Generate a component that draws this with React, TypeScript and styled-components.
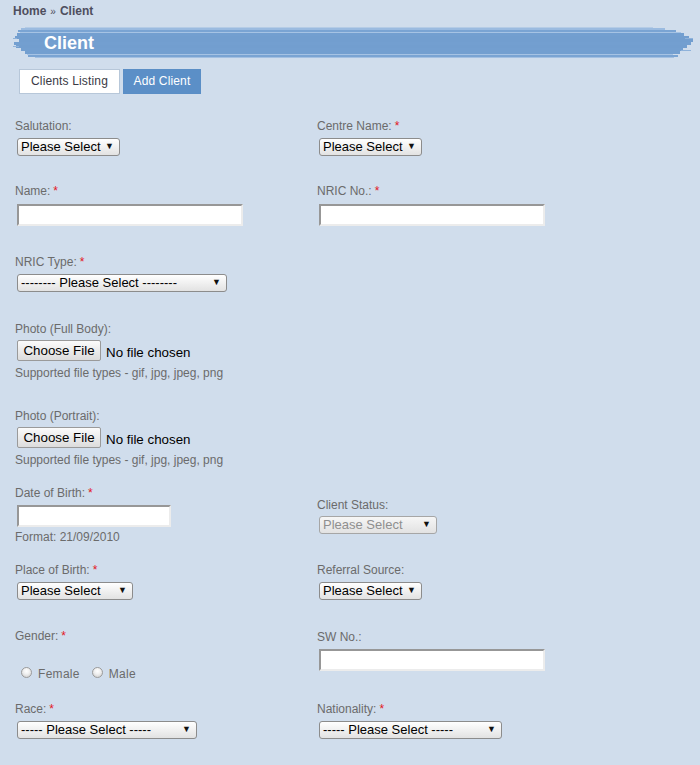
import React from "react";
import styled, { createGlobalStyle } from "styled-components";

const GlobalStyle = createGlobalStyle`
  html, body {
    margin: 0;
    padding: 0;
    background: #d0ddec;
    font-family: "Liberation Sans", Arial, sans-serif;
  }
`;

const Page = styled.div`
  width: 700px;
  min-height: 765px;
  background: #d0ddec;
  padding-top: 4px;
  box-sizing: border-box;
`;

const Breadcrumb = styled.div`
  padding-left: 13px;
  font-size: 12px;
  line-height: 14px;
  font-weight: bold;
  color: #4e4e5e;

  span {
    font-weight: normal;
    font-size: 10px;
    margin: 0 4px 0 4px;
  }
`;

const Banner = styled.div`
  position: relative;
  margin: 7px 0 0 13px;
  width: 682px;
  height: 36px;
`;

const BannerArt = styled.svg`
  position: absolute;
  left: 0;
  top: 0;
`;

const BannerTitle = styled.h1`
  position: relative;
  margin: 0;
  padding-left: 31px;
  font-size: 18px;
  line-height: 35px;
  font-weight: bold;
  color: #ffffff;
`;

const Tabs = styled.div`
  display: flex;
  gap: 3px;
  margin: 7px 0 0 19px;
`;

const Tab = styled.div<{ $active?: boolean; $w: number }>`
  width: ${(p) => p.$w}px;
  height: 25px;
  box-sizing: border-box;
  text-align: center;
  font-size: 12px;
  line-height: 23px;
  border: 1px solid ${(p) => (p.$active ? "#5a8ec6" : "#b7c7d9")};
  background: ${(p) => (p.$active ? "#5b8fc7" : "#ffffff")};
  color: ${(p) => (p.$active ? "#ffffff" : "#3a3a44")};
  letter-spacing: 0.15px;
`;

const Form = styled.div`
  margin-top: 25px;
  padding-left: 15px;
`;

const Row = styled.div<{ $h: number }>`
  display: grid;
  grid-template-columns: 302px 1fr;
  align-items: start;
  height: ${(p) => p.$h}px;
`;

const Cell = styled.div<{ $offset?: number }>`
  padding-top: ${(p) => p.$offset ?? 0}px;
`;

const Label = styled.div`
  font-size: 12px;
  line-height: 15px;
  color: #6b6b6b;
`;

const Req = styled.span`
  color: #e3161d;
  margin-left: 3px;
`;

const Control = styled.div<{ $top?: number }>`
  margin: ${(p) => p.$top ?? 4}px 0 0 2px;
  display: flex;
  align-items: center;
`;

const Note = styled.div<{ $top: number }>`
  margin-top: ${(p) => p.$top}px;
  font-size: 12px;
  line-height: 15px;
  color: #6b6b6b;
`;

const SelectWrap = styled.span`
  position: relative;
  display: block;

  &::after {
    content: "▼";
    position: absolute;
    right: 6px;
    top: 3px;
    font-size: 9px;
    line-height: 11px;
    color: #111;
    pointer-events: none;
  }
`;

const Select = styled.select<{ $w: number }>`
  appearance: none;
  -webkit-appearance: none;
  display: block;
  width: ${(p) => p.$w}px;
  height: 18px;
  box-sizing: border-box;
  margin: 0;
  padding: 0 16px 0 3px;
  font-family: "Liberation Sans", Arial, sans-serif;
  font-size: 13px;
  line-height: 16px;
  color: #000;
  border: 1px solid #8c8c8c;
  border-radius: 3px;
  background: linear-gradient(#ffffff, #e2e2e2);

  &:disabled {
    color: #8f8f8f;
    border-color: #a6a6a6;
    background: linear-gradient(#f6f6f6, #e2e2e2);
    opacity: 1;
  }
`;

const TextInput = styled.input<{ $w: number }>`
  display: block;
  width: ${(p) => p.$w}px;
  height: 22px;
  box-sizing: border-box;
  margin: 0;
  padding: 1px 3px;
  font-family: "Liberation Sans", Arial, sans-serif;
  font-size: 13px;
  background: #fff;
  border-style: solid;
  border-width: 2px;
  border-color: #979797 #ececec #ececec #979797;
  outline: none;
`;

const FileButton = styled.button`
  width: 84px;
  height: 21px;
  box-sizing: border-box;
  margin: 0;
  padding: 0;
  font-family: "Liberation Sans", Arial, sans-serif;
  font-size: 13.33px;
  color: #000;
  border: 1px solid #9a9a9a;
  border-radius: 2px;
  background: linear-gradient(#fbfbfb, #dcdcdc);
`;

const FileStatus = styled.span`
  margin: 4px 0 0 5px;
  font-size: 13.33px;
  color: #000;
`;

const RadioRow = styled.div`
  display: flex;
  align-items: center;
  margin: 22px 0 0 6px;
  height: 15px;
`;

const RadioOption = styled.label`
  display: flex;
  align-items: center;
  margin-right: 12px;
  font-size: 12px;
  color: #6b6b6b;
  letter-spacing: 0.3px;
`;

const Radio = styled.input`
  appearance: none;
  -webkit-appearance: none;
  width: 11px;
  height: 11px;
  margin: -2px 6px 0 0;
  border: 1px solid #9b9b9b;
  border-radius: 50%;
  background: radial-gradient(circle at 50% 35%, #ffffff 0%, #f0f0f0 40%, #c9c9c9 100%);
  box-sizing: border-box;
`;

type Stroke = { y: number; h: number; x1: number; x2: number; c: string };

// brush strokes of the title banner, coordinates relative to the banner box
const strokes: Stroke[] = [
  { y: 1, h: 1, x1: 12, x2: 640, c: "#b5cce6" },
  { y: 2, h: 2, x1: 8, x2: 652, c: "#9bbbe0" },
  { y: 4, h: 2, x1: 5, x2: 663, c: "#7aa4d3" },
  { y: 6, h: 1, x1: 7, x2: 668, c: "#a6c3e4" },
  { y: 7, h: 3, x1: 4, x2: 671, c: "#739fd0" },
  { y: 10, h: 3, x1: 2, x2: 676, c: "#729ecf" },
  { y: 13, h: 3, x1: 6, x2: 680, c: "#729ecf" },
  { y: 16, h: 3, x1: 1, x2: 678, c: "#739fd0" },
  { y: 19, h: 3, x1: 3, x2: 674, c: "#729ecf" },
  { y: 22, h: 3, x1: 8, x2: 670, c: "#739fd0" },
  { y: 25, h: 3, x1: 12, x2: 667, c: "#739fd0" },
  { y: 28, h: 1, x1: 14, x2: 660, c: "#a6c3e4" },
  { y: 29, h: 2, x1: 15, x2: 665, c: "#7aa4d3" },
  { y: 31, h: 1, x1: 22, x2: 661, c: "#a3c0e2" },
];

const BannerStrokes = () => (
  <BannerArt width="682" height="36" viewBox="0 0 682 36">
    {strokes.map((s, i) => (
      <rect key={i} x={s.x1} y={s.y} width={s.x2 - s.x1} height={s.h} fill={s.c} />
    ))}
    <rect x="0" y="12" width="4" height="1" fill="#8fb2da" />
    <rect x="0" y="20" width="6" height="1" fill="#8fb2da" />
    <rect x="672" y="12" width="8" height="1" fill="#8fb2da" />
    <rect x="668" y="24" width="10" height="1" fill="#8fb2da" />
  </BannerArt>
);

const Dropdown = ({ w, text, disabled }: { w: number; text: string; disabled?: boolean }) => (
  <SelectWrap>
    <Select $w={w} disabled={disabled} defaultValue="">
      <option value="">{text}</option>
    </Select>
  </SelectWrap>
);

const FieldLabel = ({ text, required }: { text: string; required?: boolean }) => (
  <Label>
    {text}
    {required && <Req>*</Req>}
  </Label>
);

const FileField = () => (
  <Control $top={3}>
    <FileButton type="button">Choose File</FileButton>
    <FileStatus>No file chosen</FileStatus>
  </Control>
);

export default function App() {
  return (
    <Page>
      <GlobalStyle />
      <Breadcrumb>
        Home<span>»</span>Client
      </Breadcrumb>
      <Banner>
        <BannerStrokes />
        <BannerTitle>Client</BannerTitle>
      </Banner>
      <Tabs>
        <Tab $w={101}>Clients Listing</Tab>
        <Tab $w={78} $active>
          Add Client
        </Tab>
      </Tabs>

      <Form>
        <Row $h={65}>
          <Cell>
            <FieldLabel text="Salutation:" />
            <Control>
              <Dropdown w={103} text="Please Select" />
            </Control>
          </Cell>
          <Cell>
            <FieldLabel text="Centre Name:" required />
            <Control>
              <Dropdown w={103} text="Please Select" />
            </Control>
          </Cell>
        </Row>

        <Row $h={71}>
          <Cell>
            <FieldLabel text="Name:" required />
            <Control $top={5}>
              <TextInput $w={226} />
            </Control>
          </Cell>
          <Cell>
            <FieldLabel text="NRIC No.:" required />
            <Control $top={5}>
              <TextInput $w={226} />
            </Control>
          </Cell>
        </Row>

        <Row $h={67}>
          <Cell>
            <FieldLabel text="NRIC Type:" required />
            <Control>
              <Dropdown w={210} text="-------- Please Select --------" />
            </Control>
          </Cell>
          <Cell />
        </Row>

        <Row $h={87}>
          <Cell>
            <FieldLabel text="Photo (Full Body):" />
            <FileField />
            <Note $top={5}>Supported file types - gif, jpg, jpeg, png</Note>
          </Cell>
          <Cell />
        </Row>

        <Row $h={77}>
          <Cell>
            <FieldLabel text="Photo (Portrait):" />
            <FileField />
            <Note $top={5}>Supported file types - gif, jpg, jpeg, png</Note>
          </Cell>
          <Cell />
        </Row>

        <Row $h={77}>
          <Cell>
            <FieldLabel text="Date of Birth:" required />
            <Control>
              <TextInput $w={154} />
            </Control>
            <Note $top={3}>Format: 21/09/2010</Note>
          </Cell>
          <Cell $offset={12}>
            <FieldLabel text="Client Status:" />
            <Control $top={3}>
              <Dropdown w={118} text="Please Select" disabled />
            </Control>
          </Cell>
        </Row>

        <Row $h={66}>
          <Cell>
            <FieldLabel text="Place of Birth:" required />
            <Control>
              <Dropdown w={116} text="Please Select" />
            </Control>
          </Cell>
          <Cell>
            <FieldLabel text="Referral Source:" />
            <Control>
              <Dropdown w={103} text="Please Select" />
            </Control>
          </Cell>
        </Row>

        <Row $h={73}>
          <Cell>
            <FieldLabel text="Gender:" required />
            <RadioRow>
              <RadioOption>
                <Radio type="radio" name="gender" />
                Female
              </RadioOption>
              <RadioOption>
                <Radio type="radio" name="gender" />
                Male
              </RadioOption>
            </RadioRow>
          </Cell>
          <Cell $offset={1}>
            <FieldLabel text="SW No.:" />
            <Control>
              <TextInput $w={226} />
            </Control>
          </Cell>
        </Row>

        <Row $h={63}>
          <Cell>
            <FieldLabel text="Race:" required />
            <Control>
              <Dropdown w={180} text="----- Please Select -----" />
            </Control>
          </Cell>
          <Cell>
            <FieldLabel text="Nationality:" required />
            <Control>
              <Dropdown w={183} text="----- Please Select -----" />
            </Control>
          </Cell>
        </Row>
      </Form>
    </Page>
  );
}
